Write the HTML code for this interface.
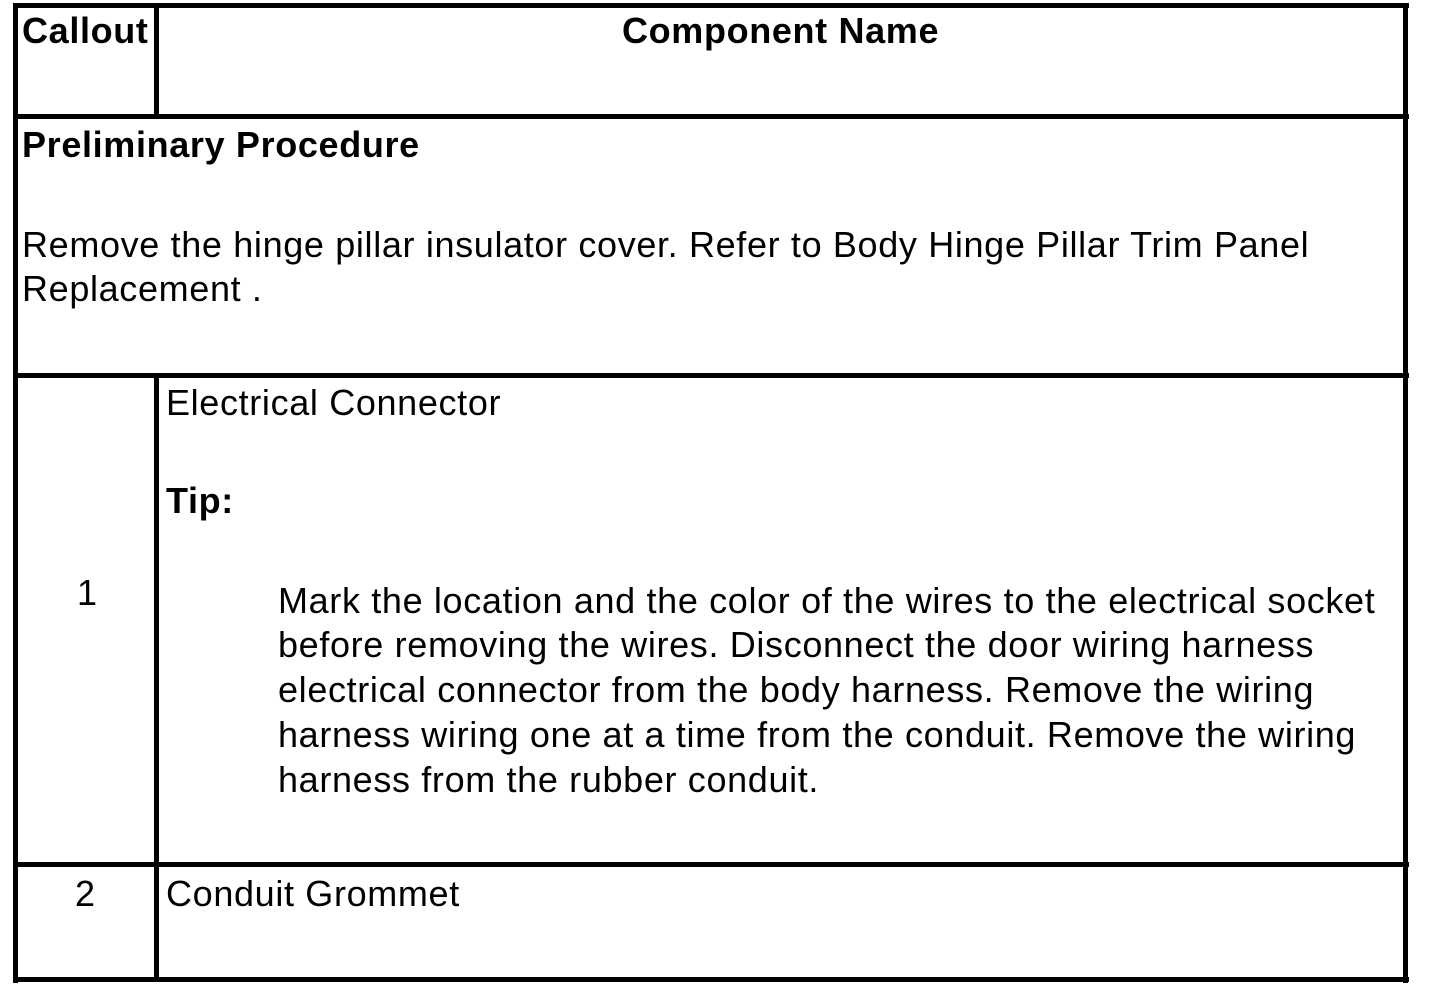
<!DOCTYPE html>
<html><head><style>
body{margin:0;width:1440px;height:990px;background:#fff;position:relative;overflow:hidden;font-family:"Liberation Sans",Arial,sans-serif;font-size:36px;letter-spacing:0.65px;color:#000}
.b{position:absolute;background:#000}
.t{position:absolute;white-space:nowrap;line-height:45px}
</style></head><body>
<div class="b" style="left:13px;top:3px;width:1396px;height:5px"></div>
<div class="b" style="left:13px;top:3px;width:5px;height:980px"></div>
<div class="b" style="left:1403px;top:3px;width:5px;height:980px"></div>
<div class="b" style="left:13px;top:977px;width:1396px;height:5px"></div>
<div class="b" style="left:154px;top:3px;width:5px;height:115px"></div>
<div class="b" style="left:13px;top:114px;width:1396px;height:5px"></div>
<div class="b" style="left:13px;top:373px;width:1396px;height:5px"></div>
<div class="b" style="left:154px;top:373px;width:5px;height:609px"></div>
<div class="b" style="left:13px;top:862px;width:1396px;height:5px"></div>

<div class="t" style="left:22px;top:8px;font-weight:bold">Callout</div>
<div class="t" style="left:622px;top:8px;font-weight:bold">Component Name</div>
<div class="t" style="left:22px;top:122px;font-weight:bold">Preliminary Procedure</div>
<div class="t" style="left:22px;top:222px">Remove the hinge pillar insulator cover. Refer to Body Hinge Pillar Trim Panel</div>
<div class="t" style="left:22px;top:266px">Replacement .</div>
<div class="t" style="left:166px;top:380px">Electrical Connector</div>
<div class="t" style="left:166px;top:478px;font-weight:bold">Tip:</div>
<div class="t" style="left:77px;top:570px">1</div>
<div class="t" style="left:278px;top:578px">Mark the location and the color of the wires to the electrical socket</div>
<div class="t" style="left:278px;top:622px">before removing the wires. Disconnect the door wiring harness</div>
<div class="t" style="left:278px;top:667px">electrical connector from the body harness. Remove the wiring</div>
<div class="t" style="left:278px;top:712px">harness wiring one at a time from the conduit. Remove the wiring</div>
<div class="t" style="left:278px;top:757px">harness from the rubber conduit.</div>
<div class="t" style="left:75px;top:871px">2</div>
<div class="t" style="left:166px;top:871px">Conduit Grommet</div>
</body></html>
